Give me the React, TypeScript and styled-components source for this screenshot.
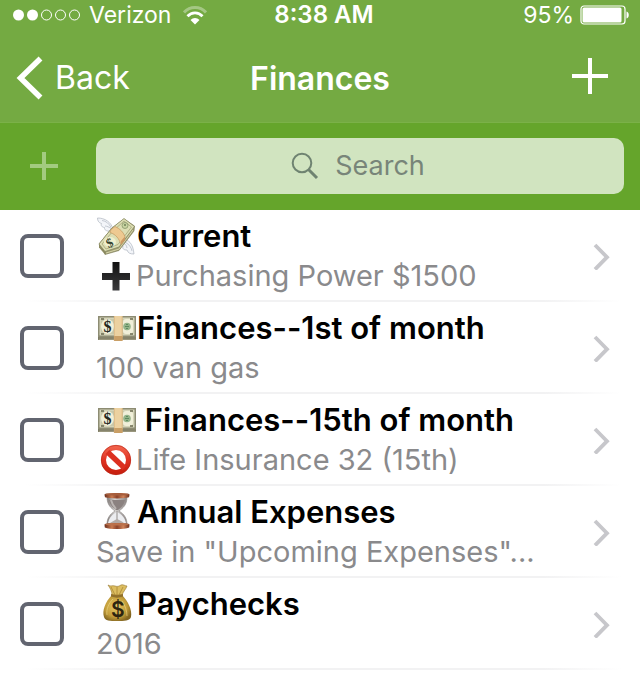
import React from "react";
import styled, { createGlobalStyle } from "styled-components";

const GlobalStyle = createGlobalStyle`
  * { box-sizing: border-box; }
  body {
    margin: 0;
    background: #ffffff;
    font-family: Inter, "Liberation Sans", sans-serif;
  }
  button, input { font: inherit; }
`;

const Header = styled.header`
  background: #74aa42;
  color: #ffffff;
  border-bottom: 1px solid #7bb148;
`;

const StatusBar = styled.div`
  display: grid;
  grid-template-columns: 1fr auto 1fr;
  align-items: center;
  height: 30px;
  padding: 0 10px 0 12px;
  font-size: 23px;
  line-height: 30px;
`;

const StatusGroup = styled.div<{ $end?: boolean }>`
  display: flex;
  align-items: center;
  justify-content: ${(p) => (p.$end ? "flex-end" : "flex-start")};
  gap: ${(p) => (p.$end ? 6 : 8)}px;
`;

const Carrier = styled.span`
  padding-right: 4px;
`;

const Clock = styled.time`
  font-size: 24px;
  font-weight: 600;
  padding-left: 6px;
`;

const NavBar = styled.nav`
  display: grid;
  grid-template-columns: 1fr auto 1fr;
  align-items: center;
  height: 92px;
  padding: 4px 32px 0 16px;
`;

const BackLink = styled.a`
  display: flex;
  align-items: center;
  gap: 12px;
  color: inherit;
  font-size: 32px;
  line-height: 40px;
  text-decoration: none;
`;

const Title = styled.h1`
  margin: 0;
  padding: 2px 0 0 16px;
  font-size: 32px;
  line-height: 40px;
  font-weight: 600;
`;

const IconButton = styled.button<{ $faded?: boolean }>`
  display: flex;
  justify-self: end;
  padding: 0 0 ${(p) => (p.$faded ? 0 : 4)}px;
  border: 0;
  background: none;
  color: ${(p) => (p.$faded ? "#a3cb80" : "#ffffff")};
  cursor: pointer;
`;

const SearchBar = styled.div`
  display: flex;
  align-items: center;
  gap: 38px;
  padding: 15px 16px 16px 30px;
  background: #65a52b;
`;

const SearchField = styled.label`
  display: flex;
  flex: 1;
  align-items: center;
  justify-content: center;
  gap: 16px;
  height: 56px;
  padding-right: 4px;
  border-radius: 10px;
  background: #d1e4c0;
  color: #6f8371;
`;

const SearchInput = styled.input`
  field-sizing: content;
  min-width: 88px;
  padding: 0;
  border: 0;
  outline: 0;
  background: none;
  color: #3f4b40;
  font-size: 27px;
  line-height: 40px;
  &::placeholder {
    color: #788579;
    opacity: 1;
  }
`;

const List = styled.ul`
  margin: 0;
  padding: 0;
  list-style: none;
`;

const Row = styled.li`
  display: flex;
  align-items: center;
  gap: 32px;
  height: 92px;
  padding: 0 30px 0 20px;
  background: linear-gradient(to right, #ffffff 4%, #f2f2f3 20%, #f2f2f3 85%, #ffffff 97%) 0 90px / 100% 2px no-repeat;
`;

const Tick = styled.input`
  appearance: none;
  flex: none;
  width: 44px;
  height: 44px;
  margin: 0;
  border: 4px solid #626570;
  border-radius: 8px;
  cursor: pointer;
  &:checked {
    background: #626570;
    box-shadow: inset 0 0 0 6px #ffffff;
  }
`;

const RowLink = styled.a`
  display: flex;
  flex: 1;
  min-width: 0;
  align-items: center;
  justify-content: space-between;
  color: #000000;
  text-decoration: none;
`;

const RowText = styled.div`
  min-width: 0;
`;

const Line = styled.div<{ $detail?: boolean }>`
  display: flex;
  align-items: center;
  gap: ${(p) => (p.$detail ? 0 : 1)}px;
  height: 40px;
  white-space: pre;
  font-size: ${(p) => (p.$detail ? 29 : 31)}px;
  line-height: 40px;
  font-weight: ${(p) => (p.$detail ? 400 : 600)};
  color: ${(p) => (p.$detail ? "#8a8a8c" : "#000000")};
  svg { flex: none; }
`;

const Plus = ({ size }: { size: number }) => (
  <svg width={size} height={size} viewBox={`0 0 ${size} ${size}`} aria-hidden="true">
    <path d={`M${size / 2} 0V${size}M0 ${size / 2}H${size}`} stroke="currentColor" strokeWidth="4" />
  </svg>
);

const Signal = () => (
  <svg width="69" height="12" viewBox="0 0 69 12" role="img" aria-label="Signal 2 of 5">
    {[6, 20, 34, 48, 62].map((x, i) => (
      <circle key={x} cx={x + 0.5} cy="6" r={i < 2 ? 5.5 : 5} fill={i < 2 ? "#fff" : "none"} stroke="#fff" strokeWidth={i < 2 ? 0 : 1} />
    ))}
  </svg>
);

const Wifi = () => (
  <svg width="24" height="19" viewBox="0 0 24 19" role="img" aria-label="Wi-Fi">
    <path d="M1 6.5C7-.1 17-.1 23 6.5" fill="none" stroke="#fff" strokeWidth="3" opacity=".35" />
    <path d="M4.500 10.200c4.200-4.500 10.800-4.500 15 0" fill="none" stroke="#fff" strokeWidth="2.800" />
    <path d="M7.500 14c2.600-2.700 6.400-2.700 9 0L12 18.500z" fill="#fff" />
  </svg>
);

const Battery = () => (
  <svg width="50" height="20" viewBox="0 0 50 20" role="img" aria-label="Battery">
    <rect x="1" y="1" width="44" height="18" rx="3" fill="none" stroke="#fff" strokeWidth="1.200" />
    <rect x="2.500" y="2.500" width="39" height="15" rx="1.500" fill="#fff" />
    <path d="M46.500 6.500c3 .7 3 6.300 0 7z" fill="#fff" />
  </svg>
);

const BackChevron = () => (
  <svg width="27" height="44" viewBox="0 0 27 44" aria-hidden="true">
    <path d="M24.500 2.500L4.500 22L24.500 41.500" fill="none" stroke="#fff" strokeWidth="5.500" />
  </svg>
);

const Disclosure = () => (
  <svg width="17" height="28" viewBox="0 0 17 28" aria-hidden="true">
    <path d="M2 3l12 12.200L2 27.400" fill="none" stroke="#c7c7cb" strokeWidth="3.800" />
  </svg>
);

const Magnifier = () => (
  <svg width="28" height="28" viewBox="0 0 28 28" aria-hidden="true">
    <circle cx="11" cy="11" r="9.300" fill="none" stroke="currentColor" strokeWidth="2" />
    <path d="M17.500 17.500L26 26" stroke="currentColor" strokeWidth="3" />
  </svg>
);

const WingedMoney = () => (
  <svg width="40" height="40" viewBox="0 0 40 40" aria-hidden="true">
    <g stroke="#aeb4be" strokeWidth=".7" fill="#f3f5f9">
      <path d="M17 13C15 6 9 2 1.500 2c0 3 1.500 5 4 5.500-1 2 .5 3.800 3 4-.3 2.500 2 4 6 3.500z" />
      <path d="M27 24c5-1 10 3 11 14-4 0-6-1-7-4-3 0-5-1-4-4-2-1-2-4 0-6z" />
      <path d="M6 4.500c4 .5 7 3 9 7M9 10c2 .2 4 1 6 2.500M36 35c-.4-3-3-7-7-9M31 32c-.3-2-1-3.500-3-4.500" fill="none" />
    </g>
    <path d="M3 28l6 7.500L9 38.500 3 31.500z" fill="#8e8c62" />
    <path d="M9 38.500l14-4L38 15l.5-5L28 3l-12 9L3 28l6 8z" fill="#9d9c72" stroke="#77764f" strokeWidth=".6" />
    <path d="M3 28L16 12 28 2.500l10.500 8L23 31 9 35.500z" fill="#dddeb4" stroke="#83845c" strokeWidth=".7" />
    <path d="M6 28L17 15 28 5l7.500 6L22 28.500 10 33z" fill="none" stroke="#a5a677" strokeWidth=".8" />
    <path d="M10 37l13-4L37 14" fill="none" stroke="#d6d4a9" strokeWidth="1" />
    <path d="M15 13.500l4-3c5 2 8.500 6 10 10l-1 4-3 4c-2-6-5-10-11-12z" fill="#eec991" stroke="#bc8e56" strokeWidth=".6" />
    <path d="M25 28.500v-3.500l3.800-4.500v4z" fill="#cb9962" />
    <circle cx="29" cy="9.500" r="3" fill="#c8d3a1" stroke="#87966a" strokeWidth=".8" />
    <circle cx="29" cy="9" r="1" fill="#6f8058" />
    <ellipse cx="14" cy="26" rx="6" ry="5" fill="#eff0ce" />
    <text x="10" y="31" fontSize="13" fontWeight="600" fontFamily="Liberation Serif, serif" fill="#34432e" transform="rotate(-25 14 26)">$</text>
  </svg>
);

const Banknote = () => (
  <svg width="40" height="40" viewBox="0 0 40 40" aria-hidden="true">
    <rect x="2" y="9" width="38" height="23" fill="#74725c" />
    <rect x="2" y="8" width="38" height="21" fill="#8d8c73" />
    <rect x="4" y="10" width="34" height="17" fill="#c8c8aa" stroke="#e6e5cc" strokeWidth=".8" />
    <ellipse cx="11.500" cy="18.500" rx="6.500" ry="7.500" fill="#f0efd9" />
    <rect x="27" y="11" width="10" height="15" rx="3" fill="#f0efd9" />
    <circle cx="31" cy="18.500" r="3.800" fill="#93b48a" />
    <path d="M29 18.500h4M30 16.500h2M30 20.500h2" stroke="#5f8b60" strokeWidth="1" />
    <path d="M5 11h3M5 26h3M34 11h3M34 26h3" stroke="#6b6b52" strokeWidth="1.500" />
    <path d="M2.500 30H40M2.500 31.500H40" stroke="#b3b096" strokeWidth=".6" />
    <text x="7.500" y="24" fontSize="16" fontWeight="700" fontFamily="Liberation Serif, serif" fill="#24291f">$</text>
    <rect x="18" y="8" width="8.500" height="21" fill="#ecd1a0" />
    <rect x="18" y="28" width="8.500" height="5" fill="#c99f66" />
    <path d="M18.300 8v25M26.200 8v25" stroke="#d2ab73" strokeWidth=".6" />
  </svg>
);

const Hourglass = () => (
  <svg width="40" height="40" viewBox="0 0 40 40" aria-hidden="true">
    <defs>
      <linearGradient id="wood">
        <stop offset="0" stopColor="#6b2e1c" />
        <stop offset=".3" stopColor="#c97a50" />
        <stop offset=".5" stopColor="#8a422a" />
        <stop offset=".75" stopColor="#d08359" />
        <stop offset="1" stopColor="#6b2e1c" />
      </linearGradient>
      <linearGradient id="glass">
        <stop offset="0" stopColor="#817c7a" />
        <stop offset=".4" stopColor="#d4d2d0" />
        <stop offset="1" stopColor="#8c8583" />
      </linearGradient>
    </defs>
    <path d="M11 5h20c0 8-4 11-8 14 5 3 8 7 8 13H11c0-6 3-10 8-13-4-3-8-6-8-14z" fill="url(#glass)" stroke="#918b89" strokeWidth=".6" />
    <path d="M13 8h16c-1 5-4 8-7 10h-2c-3-2-6-5-7-10z" fill="#8b8280" />
    <path d="M15 8c1 4 3 7 5 9" fill="none" stroke="#bbb5b2" strokeWidth="2" />
    <path d="M20.500 20h1c4 2.500 7 5 8.500 11H12c1.500-6 4.500-8.500 8.500-11z" fill="#ecedf0" />
    <path d="M21 19v11" stroke="#a29d9b" strokeWidth="1.200" />
    <path d="M14 31c3-2 5-3 7-4 2 1 5 2 7 4z" fill="#b2aaa6" />
    <path d="M8.500 2.500c0-2 25-2 25 0l-.5 2.800c-5 1.500-19 1.500-24 0z" fill="url(#wood)" />
    <ellipse cx="21" cy="2.300" rx="12" ry="1.300" fill="#a65e3d" />
    <path d="M8.500 32.500c0-2 25-2 25 0l-.3 3c-5 2-19.500 2-24.400 0z" fill="url(#wood)" />
    <ellipse cx="21" cy="32.300" rx="12" ry="1.300" fill="#bb714b" />
  </svg>
);

const MoneyBag = () => (
  <svg width="40" height="40" viewBox="0 0 40 40" aria-hidden="true">
    <defs>
      <radialGradient id="sack" cx=".45" cy=".45" r=".6">
        <stop offset="0" stopColor="#e8c966" />
        <stop offset=".65" stopColor="#c39e3b" />
        <stop offset="1" stopColor="#826520" />
      </radialGradient>
    </defs>
    <path d="M16 11C9 18 6 27 8 33c1 4 6 4 13 4s13 0 14-4c1.500-7-3-16-9-22z" fill="url(#sack)" />
    <path d="M12 1c3 2 4 0 7 1s4 0 6-1 4 1 6 1c-1 3-4 6-5 9H16c0-4-2-7-4-10z" fill="#dcbd60" stroke="#94742a" strokeWidth=".6" />
    <path d="M15 3l4 8M21 3v8M27 3l-4 8" stroke="#a98634" strokeWidth=".8" />
    <path d="M15 10c4 1.500 8 1.500 12 0v2.500c-4 1.500-8 1.500-12 0z" fill="#91702b" />
    <path d="M11 31c-1-6 2-12 6-16M31 32c0-5-2-11-5-15" fill="none" stroke="#f0da8a" strokeWidth="1" opacity=".6" />
    <text x="15" y="32.500" fontSize="21" fontWeight="600" fontFamily="Inter, sans-serif" fill="#2c2410">$</text>
  </svg>
);

const HeavyPlus = () => (
  <svg width="40" height="40" viewBox="0 0 40 40" aria-hidden="true">
    <defs>
      <linearGradient id="ink" x2="0" y2="1">
        <stop offset="0" stopColor="#111" />
        <stop offset="1" stopColor="#3b3b3d" />
      </linearGradient>
    </defs>
    <path d="M16.500 6h7v11h10.500v7H23.500v10.500h-7V24H6v-7h10.500z" fill="url(#ink)" />
  </svg>
);

const Prohibited = () => (
  <svg width="40" height="40" viewBox="0 0 40 40" aria-hidden="true">
    <defs>
      <linearGradient id="red" x2="0" y2="1">
        <stop offset="0" stopColor="#f0604a" />
        <stop offset=".5" stopColor="#e03323" />
        <stop offset="1" stopColor="#c9200f" />
      </linearGradient>
    </defs>
    <circle cx="20" cy="20" r="12.500" fill="none" stroke="url(#red)" strokeWidth="5" />
    <path d="M11.500 12l17 16" stroke="#dc3020" strokeWidth="5.500" />
    <circle cx="20" cy="20" r="14.700" fill="none" stroke="#b5281b" strokeWidth=".6" />
  </svg>
);

type Item = {
  id: string;
  icon: React.ReactNode;
  title: string;
  detailIcon?: React.ReactNode;
  detail: string;
};

const items: Item[] = [
  { id: "current", icon: <WingedMoney />, title: "Current", detailIcon: <HeavyPlus />, detail: "Purchasing Power $1500" },
  { id: "first", icon: <Banknote />, title: "Finances--1st of month", detail: "100 van gas" },
  { id: "fifteenth", icon: <Banknote />, title: " Finances--15th of month", detailIcon: <Prohibited />, detail: "Life Insurance 32 (15th)" },
  { id: "annual", icon: <Hourglass />, title: "Annual Expenses", detail: "Save in \"Upcoming Expenses\"..." },
  { id: "paychecks", icon: <MoneyBag />, title: "Paychecks", detail: "2016" },
];

export default function App() {
  return (
    <>
      <GlobalStyle />
      <Header>
        <StatusBar>
          <StatusGroup>
            <Signal />
            <Carrier>Verizon</Carrier>
            <Wifi />
          </StatusGroup>
          <Clock>8:38 AM</Clock>
          <StatusGroup $end>
            <span>95%</span>
            <Battery />
          </StatusGroup>
        </StatusBar>
        <NavBar>
          <BackLink href="#back">
            <BackChevron />
            Back
          </BackLink>
          <Title>Finances</Title>
          <IconButton type="button" aria-label="Add">
            <Plus size={36} />
          </IconButton>
        </NavBar>
      </Header>
      <SearchBar>
        <IconButton type="button" aria-label="Add item" $faded>
          <Plus size={28} />
        </IconButton>
        <SearchField>
          <Magnifier />
          <SearchInput type="text" placeholder="Search" aria-label="Search" />
        </SearchField>
      </SearchBar>
      <main>
        <List>
          {items.map((item) => (
            <Row key={item.id}>
              <Tick type="checkbox" aria-labelledby={item.id} />
              <RowLink href={`#${item.id}`}>
                <RowText>
                  <Line id={item.id}>
                    {item.icon}
                    <span>{item.title}</span>
                  </Line>
                  <Line $detail>
                    {item.detailIcon}
                    <span>{item.detail}</span>
                  </Line>
                </RowText>
                <Disclosure />
              </RowLink>
            </Row>
          ))}
        </List>
      </main>
    </>
  );
}
